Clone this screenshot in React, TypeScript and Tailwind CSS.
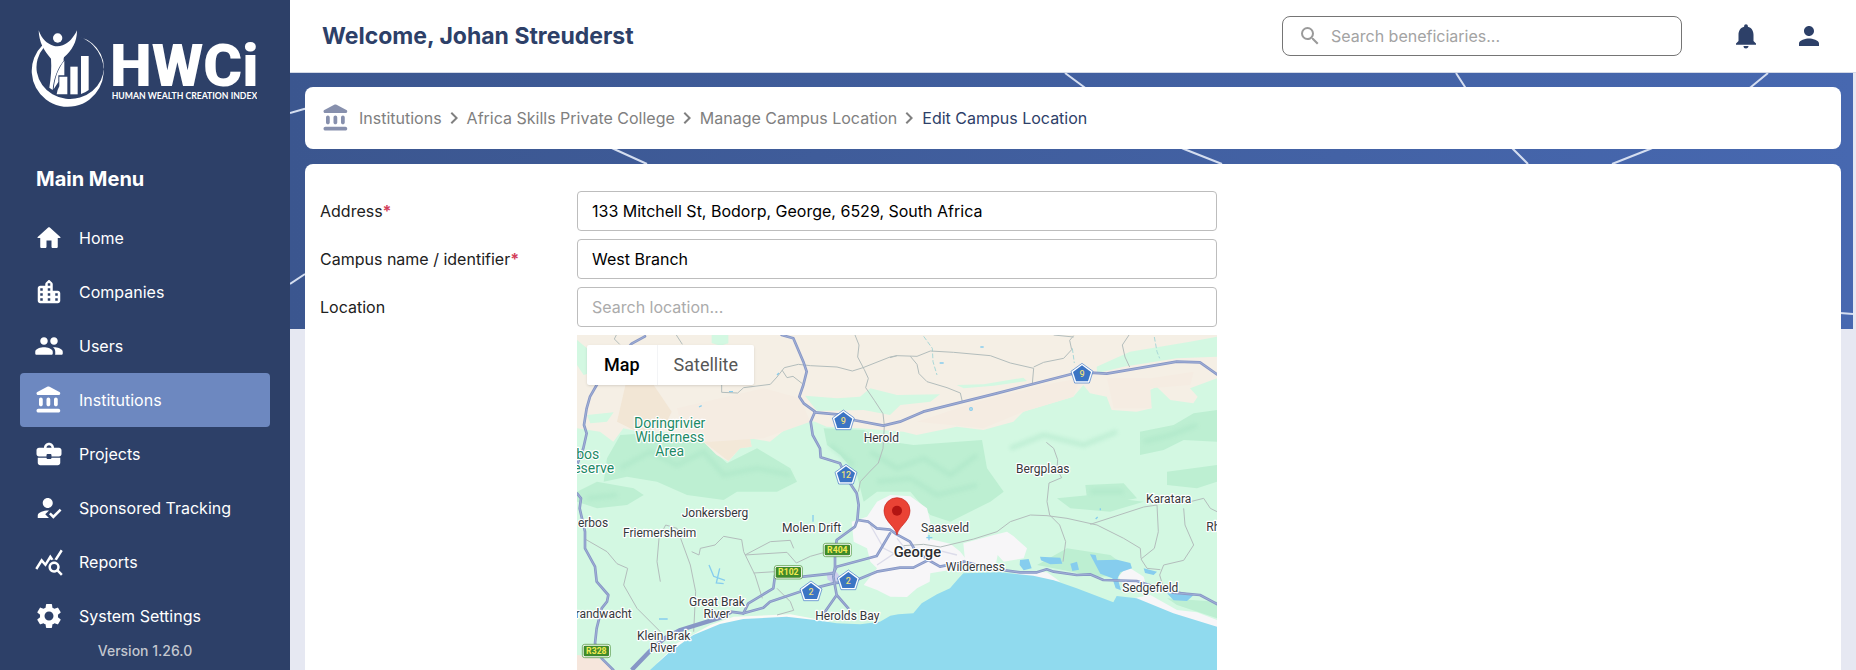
import {
  MdChevronRight,
  MdHowToReg,
  MdNotifications,
  MdPerson,
  MdQueryStats,
  MdSearch,
  MdSettings,
} from "react-icons/md";

const paths = {
  home: "M10 19v-5h4v5c0 .55.45 1 1 1h3c.55 0 1-.45 1-1v-7h1.7c.46 0 .68-.57.33-.87L12.67 3.6c-.38-.34-.96-.34-1.34 0l-8.36 7.53c-.34.3-.13.87.33.87H5v7c0 .55.45 1 1 1h3c.55 0 1-.45 1-1z",
  city: "M15 11V5.83c0-.53-.21-1.04-.59-1.41L12.7 2.71c-.39-.39-1.02-.39-1.41 0l-1.7 1.7C9.21 4.79 9 5.3 9 5.83V7H5c-1.1 0-2 .9-2 2v10c0 1.1.9 2 2 2h14c1.1 0 2-.9 2-2v-6c0-1.1-.9-2-2-2h-4zm-8 8H5v-2h2v2zm0-4H5v-2h2v2zm0-4H5V9h2v2zm6 8h-2v-2h2v2zm0-4h-2v-2h2v2zm0-4h-2V9h2v2zm0-4h-2V5h2v2zm6 12h-2v-2h2v2zm0-4h-2v-2h2v2z",
  people:
    "M16 11c1.66 0 2.99-1.34 2.99-3S17.66 5 16 5s-3 1.34-3 3 1.34 3 3 3zm-8 0c1.66 0 2.99-1.34 2.99-3S9.66 5 8 5 5 6.34 5 8s1.34 3 3 3zm0 2c-2.33 0-7 1.17-7 3.5V18c0 .55.45 1 1 1h12c.55 0 1-.45 1-1v-1.5c0-2.33-4.67-3.5-7-3.5zm8 0c-.29 0-.62.02-.97.05.02.01.03.03.04.04 1.14.83 1.93 1.94 1.93 3.41V18c0 .35-.07.69-.18 1H22c.55 0 1-.45 1-1v-1.5c0-2.33-4.67-3.5-7-3.5z",
  bank: "M4 11.5v4c0 .83.67 1.5 1.5 1.5S7 16.33 7 15.5v-4c0-.83-.67-1.5-1.5-1.5S4 10.67 4 11.5zm6 0v4c0 .83.67 1.5 1.5 1.5s1.5-.67 1.5-1.5v-4c0-.83-.67-1.5-1.5-1.5s-1.5.67-1.5 1.5zM3.5 22h16c.83 0 1.5-.67 1.5-1.5s-.67-1.5-1.5-1.5h-16c-.83 0-1.5.67-1.5 1.5S2.67 22 3.5 22zM16 11.5v4c0 .83.67 1.5 1.5 1.5s1.5-.67 1.5-1.5v-4c0-.83-.67-1.5-1.5-1.5s-1.5.67-1.5 1.5zM10.57 1.49l-7.9 4.16c-.41.21-.67.64-.67 1.1C2 7.44 2.56 8 3.25 8h16.51C20.44 8 21 7.44 21 6.75c0-.46-.26-.89-.67-1.1l-7.9-4.16c-.58-.31-1.28-.31-1.86 0z",
  briefcase:
    "M13 16h-2c-.55 0-1-.45-1-1H3.01v4c0 1.1.9 2 2 2H19c1.1 0 2-.9 2-2v-4h-7c0 .55-.45 1-1 1zm7-9h-4c0-2.21-1.79-4-4-4S8 4.79 8 7H4c-1.1 0-2 .9-2 2v3c0 1.11.89 2 2 2h6v-1c0-.55.45-1 1-1h2c.55 0 1 .45 1 1v1h6c1.1 0 2-.9 2-2V9c0-1.1-.9-2-2-2zM10 7c0-1.1.9-2 2-2s2 .9 2 2H9.99z",
};

function Icon({ name }: { name: keyof typeof paths }) {
  return (
    <svg viewBox="0 0 24 24" width="30" height="30" fill="currentColor" aria-hidden="true">
      <path d={paths[name]} />
    </svg>
  );
}

const menu = [
  { label: "Home", icon: <Icon name="home" /> },
  { label: "Companies", icon: <Icon name="city" /> },
  { label: "Users", icon: <Icon name="people" /> },
  { label: "Institutions", icon: <Icon name="bank" />, active: true },
  { label: "Projects", icon: <Icon name="briefcase" /> },
  { label: "Sponsored Tracking", icon: <MdHowToReg size={30} /> },
  { label: "Reports", icon: <MdQueryStats size={30} /> },
  { label: "System Settings", icon: <MdSettings size={30} /> },
];

const crumbs = ["Institutions", "Africa Skills Private College", "Manage Campus Location"];

function Logo() {
  return (
    <svg viewBox="93 84 678 240" className="h-20 w-[226px]" fill="#fff" role="img" aria-label="HWCi">
      <path d="M128 135 A108 108 0 1 0 240 111 A101 95 0 1 1 132 142 Z" />
      <circle cx="173" cy="114" r="14" />
      <path d="M116 91 C126 118 140 131 160 137 Q173 141 188 136 C206 129 221 113 231 91 C231 128 215 152 192 172 Q190 178 191 182 C175 202 161 232 158 270 L148 263 C153 232 155 204 153 176 C132 152 117 127 116 91 Z" />
      <path d="M193 182 V226 H175 V246 L161 268 C164 232 175 204 193 182 Z" />
      <path d="M178 230 h24 v53 h-32 q2 -14 8 -24 Z" />
      <rect x="211" y="200" width="22" height="83" />
      <path d="M243 168 h23 v102 q-10 8 -23 12 Z" />
      <text x="330" y="258" fontFamily="Roboto, sans-serif" fontSize="178" fontWeight="900">
        HWCi
      </text>
      <text x="335" y="296" fontFamily="Lato, sans-serif" fontSize="26" fontWeight="700">
        HUMAN WEALTH CREATION INDEX
      </text>
    </svg>
  );
}

function Sidebar() {
  return (
    <aside className="flex w-[290px] shrink-0 flex-col bg-[#2d4068] text-white">
      <div className="px-[31px] pt-7">
        <Logo />
      </div>
      <h2 className="mt-[57px] px-9 text-xl font-bold">Main Menu</h2>
      <nav className="mt-[18px] flex flex-col px-5">
        {menu.map((m) => (
          <a
            key={m.label}
            href="#"
            className={`flex h-[54px] items-center gap-[15px] rounded px-3.5 ${m.active ? "bg-[#6d88c0]" : ""}`}
          >
            {m.icon}
            {m.label}
          </a>
        ))}
      </nav>
      <p className="text-center text-sm leading-4 font-medium text-[#c3c7cf]">Version 1.26.0</p>
    </aside>
  );
}

function Header() {
  return (
    <header className="flex h-[73px] shrink-0 items-center justify-between border-b border-[#d3d9e6] bg-white px-8">
      <h1 className="text-[23px] font-bold text-[#2d4068]">Welcome, Johan Streuderst</h1>
      <div className="flex items-center">
        <label className="flex h-10 w-[400px] items-center gap-[9px] rounded-lg border border-[#757575] px-[15px]">
          <MdSearch size={24} className="shrink-0 text-[#9a9a9a]" />
          <input
            type="search"
            aria-label="Search beneficiaries"
            placeholder="Search beneficiaries..."
            className="min-w-0 flex-1 outline-none placeholder:text-[#a3a3a3]"
          />
        </label>
        <button type="button" aria-label="Notifications" className="ml-[49px] text-[#2d4068]">
          <MdNotifications size={30} />
        </button>
        <button type="button" aria-label="Profile" className="ml-[33px] text-[#2d4068]">
          <MdPerson size={30} />
        </button>
      </div>
    </header>
  );
}

function Breadcrumbs() {
  return (
    <nav aria-label="Breadcrumb" className="flex h-[62px] shrink-0 items-center rounded-lg bg-white px-4 text-[#808080]">
      <span className="mr-2 text-[#8790ad]">
        <Icon name="bank" />
      </span>
      {crumbs.map((c) => (
        <span key={c} className="mr-px flex items-center">
          <a href="#">{c}</a>
          <MdChevronRight size={24} />
        </span>
      ))}
      <span aria-current="page" className="text-[#2d4068]">
        Edit Campus Location
      </span>
    </nav>
  );
}

const minorRoads = [
  "M118 0 L112 12 L128 28",
  "M298 0 L316 28 M434 150 V172 L482 174 L500 158 L580 148 L600 126 L622 98 L664 88 L700 92 L780 96 L826 108 L858 98 L939 66 L960 62",
  "M615 105 L630 128 L648 124 L676 146",
  "M834 0 L846 30 L842 66 L862 104 L874 130 L866 158 L892 196 L918 236 L922 272 L918 340 L904 384 L880 408 L850 440 L844 470",
  "M939 68 L960 62 L1020 64 L1060 48 L1130 52 L1240 62 L1300 84 L1370 100 L1366 146",
  "M1370 96 L1400 82 L1460 70 L1484 44 L1478 16 L1490 2 M1430 0 L1490 6",
  "M1000 64 L1020 88 L1026 116 L1050 140 L1110 158 L1150 174 L1156 200",
  "M1656 0 L1636 30 L1644 66 L1658 96",
  "M1408 322 L1430 340 L1442 374 L1440 404 L1454 428 L1416 444 L1410 500 L1418 540 L1448 570 L1466 620 L1458 680",
  "M979 632 L1040 628 L1090 636 L1190 612 L1260 590 L1300 560 L1360 540 L1410 542 L1470 550 L1560 570 L1640 610 L1690 640 L1692 670",
  "M1540 568 L1620 542 L1700 516 L1740 510 L1744 590 L1732 640 L1692 672 L1710 700 L1750 704",
  "M1820 520 L1824 570 L1850 630 L1820 676 L1760 690 L1748 720 L1760 760 L1830 776",
  "M1840 500 L1880 490 L1900 520 L1920 530",
  "M24 612 L90 650 L120 686 L152 700 L140 750 L180 820 L250 890",
  "M246 610 L240 680 L250 740 M250 600 L266 570 L300 580 L340 690 L356 770 L350 890",
  "M344 650 L366 660 L370 640 L414 630 L440 604 L494 614 L500 650 L534 720 L556 790",
  "M504 660 L580 620 L640 616 L650 640 M504 660 L630 652 L658 684 L700 664 L750 650",
  "M530 714 L594 710 M600 760 L640 800 L650 826 L600 840",
];

const motorways = [
  "M204 4 L164 26 L59 150 L39 185 L29 220 L21 270 L29 295 L19 340 L0 390",
  "M0 475 L12 490 L8 520 L24 590 L24 640 L54 695 L59 740 L94 780 L90 800 L74 820 L59 880 L54 925 L74 970 L109 1005",
  "M614 0 L649 10 L679 80 L689 110 L679 150 L667 185 L680 205 L714 230 L701 260 L707 300 L729 340 L731 367 L789 385 L809 430 L839 475 L845 510 L841 555 L834 575 L779 615 L774 660 L774 695 L769 725 L779 780 L744 830 M779 780 L814 820",
  "M714 232 L780 238 L829 255 L919 272 L969 260 L1039 230 L1259 175 L1484 117 L1539 113 L1589 116 L1799 80 L1869 82 L1920 118",
  "M459 830 L499 835 L559 818 L579 800 L669 770 L769 745 L839 735 L899 710 L969 698 L1009 698 L1054 675 L1089 695 L1160 680 L1240 700 L1329 712 L1380 712 L1409 703 L1430 710 L1499 720 L1539 718 L1579 735 L1679 738 L1789 773 L1869 780 L1920 807",
  "M499 835 L514 805 L589 760 L594 722 L679 725 L769 715 L779 695 L899 663 L939 595",
  "M841 555 L874 560 L899 580 L939 584 L959 598 L999 620 L1014 645 L1054 675",
];

const places = [
  { name: "Herold", x: 913, y: 322 },
  { name: "Bergplaas", x: 1397, y: 415 },
  { name: "Karatara", x: 1775, y: 504 },
  { name: "Rh", x: 1909, y: 587 },
  { name: "Jonkersberg", x: 414, y: 547 },
  { name: "Friemersheim", x: 248, y: 606 },
  { name: "erbos", x: 48, y: 576 },
  { name: "Molen Drift", x: 704, y: 591 },
  { name: "Saasveld", x: 1104, y: 590 },
  { name: "Wilderness", x: 1195, y: 708 },
  { name: "Great Brak", x: 420, y: 813 },
  { name: "River", x: 419, y: 848 },
  { name: "Herolds Bay", x: 811, y: 855 },
  { name: "Klein Brak", x: 260, y: 915 },
  { name: "River", x: 259, y: 951 },
  { name: "Sedgefield", x: 1720, y: 771 },
  { name: "randwacht", x: 80, y: 850 },
];

const parks = [
  { name: "Doringrivier", x: 278, y: 278 },
  { name: "Wilderness", x: 278, y: 320 },
  { name: "Area", x: 278, y: 362 },
  { name: "bos", x: 32, y: 371 },
  { name: "eserve", x: 50, y: 413 },
];

const nationalRoads = [
  { ref: "9", x: 799, y: 257 },
  { ref: "12", x: 807, y: 420 },
  { ref: "9", x: 1515, y: 117 },
  { ref: "2", x: 702, y: 770 },
  { ref: "2", x: 814, y: 737 },
];

const regionalRoads = [
  { ref: "R404", x: 781, y: 645 },
  { ref: "R102", x: 634, y: 712 },
  { ref: "R328", x: 58, y: 948 },
];

function MapCanvas() {
  return (
    <svg
      viewBox="0 0 1920 1005"
      preserveAspectRatio="xMidYMin slice"
      className="absolute inset-0 size-full"
      fontFamily="Roboto, sans-serif"
      role="img"
      aria-label="Map of George"
    >
      <defs>
        <filter id="soft" x="-10%" y="-10%" width="120%" height="120%">
          <feGaussianBlur stdDeviation="7" />
        </filter>
      </defs>
      <rect width="1920" height="1100" fill="#d3f8e2" />

      {/* forest */}
      <g fill="#bdefd2">
        <path d="M90 370 L130 300 L210 295 L310 315 L380 320 L450 385 L540 340 L640 400 L660 440 L600 470 L480 470 L440 495 L330 480 L240 440 L150 425 L80 440 Z" />
        <path d="M0 470 L60 440 L170 460 L200 480 L150 510 L60 520 L0 500 Z" />
        <path d="M740 280 L860 285 L940 320 L1010 330 L1215 315 L1230 400 L1280 470 L1240 500 L1120 560 L1060 540 L1000 470 L900 470 L860 500 L840 420 L790 360 L750 330 Z" />
        <path d="M1689 290 L1790 270 L1850 235 L1920 225 L1920 320 L1820 315 L1760 345 L1689 360 Z" />
        <path d="M1525 450 L1640 445 L1680 490 L1620 500 L1530 490 Z M1770 410 L1920 390 L1920 440 L1860 460 L1770 450 Z" />
        <path d="M1440 490 L1540 480 L1700 500 L1600 530 L1480 520 Z" />
        <path d="M1380 690 L1470 640 L1600 660 L1680 720 L1560 725 Z M1770 790 L1920 800 L1920 850 L1800 810 Z" />
      </g>
      <g fill="none" stroke="#a5e2c3" strokeWidth="14" opacity="0.45" filter="url(#soft)">
        <path d="M130 400 L220 350 L300 390 L380 350 L440 420 L540 400 L640 420" />
        <path d="M880 350 L960 400 L1040 370 L1120 420 L1200 360 M900 440 L1000 430 L1080 480 L1200 450" />
        <path d="M1700 320 L1780 300 L1860 270 M1300 340 L1400 300 L1520 330 L1620 290" />
        <path d="M30 490 L120 480 M760 330 L830 390 M1540 470 L1640 470" />
      </g>

      {/* farmland */}
      <path
        fill="#f5efe5"
        d="M0 0 H1920 V130 L1839 160 L1862 185 L1849 205 L1780 195 L1739 155 L1709 170 L1724 220 L1679 230 L1604 225 L1589 185 L1539 175 L1519 150 L1489 185 L1339 230 L1309 260 L1219 285 L1139 275 L1019 300 L979 290 L849 280 L749 275 L714 260 L679 255 L629 280 L579 320 L519 310 L524 335 L489 340 L454 380 L419 360 L379 320 L309 315 L269 290 L209 295 L139 280 L109 320 L69 290 L0 280 Z"
      />
      <g fill="#f2e6d5">
        <path d="M150 130 L230 150 L284 230 L260 280 L180 290 L120 260 Z" />
        <path d="M380 320 L519 310 L524 335 L489 340 L454 378 Z" opacity="0.8" />
      </g>
      <path d="M560 160 L670 190 L700 260 L560 310 L400 320 L320 300 L300 220 Z M1020 260 L1200 200 L1400 150 L1510 130 L1489 185 L1339 230 L1219 280 Z M1590 130 L1720 130 L1850 110 L1840 150 L1720 160 L1724 220 L1610 220 Z" fill="#f5ece2" />
      <g fill="#d3f8e2">
        <path d="M404 0 H454 V25 L430 32 L404 24 Z M0 15 L30 40 L50 110 L20 120 L0 90 Z" />
        <path d="M684 182 L780 190 L849 185 L880 160 L960 180 L1089 178 L1060 200 L970 210 L939 240 L860 225 L720 228 Z" />
        <path d="M1559 95 L1659 50 L1839 20 L1920 5 V65 L1800 70 L1640 95 L1560 115 Z" />
        <path d="M1139 150 L1220 148 L1339 128 L1350 138 L1250 152 L1160 160 Z M30 240 L110 232 L90 260 L40 265 Z" />
      </g>

      {/* towns */}
      <g fill="#f7f6f8">
        <path d="M824 560 L870 545 L900 500 L940 480 L1000 484 L1050 520 L1060 560 L1050 610 L1120 626 L1150 650 L1165 670 L1150 700 L1060 715 L1058 740 L1020 760 L990 786 L940 785 L900 765 L860 750 L900 700 L880 680 L870 640 L830 620 Z" />
        <path d="M1159 625 L1250 600 L1290 590 L1310 604 L1350 640 L1340 670 L1280 680 L1262 660 L1256 690 L1165 686 Z" />
        <path d="M1624 725 L1640 706 L1660 700 L1700 725 L1710 760 L1640 750 Z" />
        <path d="M1670 790 L1720 780 L1800 825 L1860 832 L1920 855 V880 L1780 840 Z M1300 708 L1410 712 L1450 740 L1340 726 Z" />
      </g>
      <path d="M0 960 L60 965 L110 1005 H0 Z" fill="#f6e6dc" />
      <path d="M240 985 L300 925 L400 870 L470 845 L640 838 L760 860 L640 870 L400 900 Z" fill="#fbfaf6" />

      {/* sea and lakes */}
      <path
        fill="#90daee"
        d="M219 1005 L279 950 L349 900 L429 867 L499 852 L629 845 L714 855 L779 865 L850 868 L909 860 L940 842 L964 838 L1009 835 L1034 805 L1080 778 L1119 760 L1145 730 L1159 715 L1269 712 L1369 722 L1430 736 L1499 760 L1609 802 L1619 783 L1679 790 L1789 835 L1920 875 V1100 H200 Z"
      />
      <g fill="#86cdee">
        <path d="M1329 675 L1355 672 L1364 700 L1340 706 L1328 690 Z M1389 665 L1450 668 L1456 686 L1420 688 L1392 676 Z" />
        <path d="M1480 686 L1500 680 L1506 704 L1486 708 Z" />
        <path d="M1539 658 L1556 660 L1560 676 L1620 674 L1660 684 L1665 700 L1630 712 L1622 730 L1632 766 L1616 760 L1606 730 L1570 716 L1556 690 Z" />
        <path d="M1700 700 L1740 710 L1730 720 L1704 714 Z M1770 775 L1850 780 L1830 798 L1790 796 Z" />
      </g>
      <g fill="none" stroke="#86cdee" strokeWidth="4">
        <path d="M396 690 L410 724 L444 736 M428 700 L418 744 L440 746 M708 540 V560 M1056 600 V616 M1048 608 H1066 M246 852 H272" />
        <path d="M456 170 H468 M366 216 L374 212 M600 120 L606 114 M1210 36 H1220 M1088 84 H1100 M1570 526 V520 M1556 552 L1562 546" />
        <circle cx="1182" cy="222" r="4" />
      </g>
      <path d="M1040 4 L1066 40 L1068 80 L1080 120 M1732 6 L1740 50 L1748 70 M1486 40 L1492 84" fill="none" stroke="#a9d8d8" strokeWidth="3" strokeDasharray="14 6" />

      {/* roads */}
      <g fill="none" stroke="#b3bdbc" strokeWidth="3" strokeLinejoin="round">
        {minorRoads.map((d) => (
          <path key={d} d={d} />
        ))}
      </g>
      <g fill="none" stroke="#dcdcea" strokeWidth="4">
        <path d="M880 570 L920 640 L960 660 M960 610 L1000 660 L1060 640 M900 690 L960 650 M1060 640 L1140 660" />
      </g>
      <path d="M748 715 L774 705 L790 725 L774 748 L752 734 Z" fill="#cfd0ee" />
      <g fill="none" stroke="#8797c6" strokeWidth="8" strokeLinejoin="round" strokeLinecap="round">
        {motorways.map((d) => (
          <path key={d} d={d} />
        ))}
      </g>
      <g fill="none" stroke="#a0afd6" strokeWidth="3" strokeLinejoin="round">
        {motorways.map((d) => (
          <path key={d} d={d} />
        ))}
      </g>
      <path d="M164 1005 L219 948 L262 910 L310 885 L430 848 L462 830" fill="none" stroke="#8797c6" strokeWidth="13" strokeLinejoin="round" />

      {/* road numbers */}
      {nationalRoads.map((r) => (
        <g key={`${r.x}-${r.ref}`} transform={`translate(${r.x} ${r.y})`}>
          <path d="M0 -32 L33 -8 L22 27 H-22 L-33 -8 Z" fill="#fff" stroke="#3b74c4" strokeWidth="2" strokeLinejoin="round" />
          <path d="M0 -26 L27 -6 L18 22 H-18 L-27 -6 Z" fill="#3b74c4" />
          <text y="10" textAnchor="middle" fontSize="27" fontWeight="500" fill="#eadf7c">
            {r.ref}
          </text>
        </g>
      ))}
      {regionalRoads.map((r) => (
        <g key={r.ref} transform={`translate(${r.x} ${r.y})`}>
          <rect x="-42" y="-20" width="84" height="40" rx="7" fill="#fff" stroke="#3f8a2b" strokeWidth="2" />
          <rect x="-38" y="-16" width="76" height="32" rx="4" fill="#3f8a2b" />
          <text y="9" textAnchor="middle" fontSize="26" fontWeight="700" fill="#f2ea52">
            {r.ref}
          </text>
        </g>
      ))}

      {/* place names */}
      <g textAnchor="middle" stroke="#fff" strokeWidth="7" strokeLinejoin="round" paintOrder="stroke">
        <g fontSize="42" fill="#1d8a66">
          {parks.map((p) => (
            <text key={p.name} x={p.x} y={p.y}>
              {p.name}
            </text>
          ))}
        </g>
        <g fontSize="36" fill="#35383c">
          {places.map((p) => (
            <text key={`${p.name}-${p.x}`} x={p.x} y={p.y}>
              {p.name}
            </text>
          ))}
        </g>
        <text x="1021" y="665" fontSize="44" fontWeight="500" fill="#2b2d30">
          George
        </text>
      </g>

      {/* marker */}
      <path d="M960 600 C956 574 921 560 921 527 A39 39 0 0 1 999 527 C999 560 964 574 960 600 Z" fill="#ea4335" stroke="#c5221f" strokeWidth="2" />
      <circle cx="960" cy="527" r="15" fill="#b31412" />
    </svg>
  );
}

const inputClass =
  "h-10 w-full rounded border border-[#bdbdbd] bg-white px-3.5 text-black outline-none placeholder:text-[#ababab]";

function Field({
  id,
  label,
  required,
  children,
}: {
  id: string;
  label: string;
  required?: boolean;
  children: React.ReactNode;
}) {
  return (
    <div className="flex shrink-0 items-center">
      <label htmlFor={id} className="w-[257px] shrink-0 text-[#212121]">
        {label}
        {required && <span className="font-bold text-[#d3405a]">*</span>}
      </label>
      <div className="w-full max-w-[640px]">{children}</div>
    </div>
  );
}

function LocationForm() {
  return (
    <form className="flex min-h-0 flex-1 flex-col gap-2 rounded-t-lg bg-white px-[15px] pt-[27px]">
      <Field id="address" label="Address" required>
        <input id="address" defaultValue="133 Mitchell St, Bodorp, George, 6529, South Africa" className={inputClass} />
      </Field>
      <Field id="campus" label="Campus name / identifier" required>
        <input id="campus" defaultValue="West Branch" className={inputClass} />
      </Field>
      <Field id="location" label="Location">
        <input id="location" placeholder="Search location..." className={inputClass} />
      </Field>
      <div className="relative ml-[257px] min-h-0 max-w-[640px] flex-1 overflow-hidden">
        <MapCanvas />
        <div className="absolute top-2.5 left-2.5 flex h-10 rounded-xs bg-white font-[Roboto,sans-serif] text-lg shadow">
          <button type="button" className="px-[17px] font-medium text-black">
            Map
          </button>
          <button type="button" className="border-l border-gray-100 px-4 text-[#565656]">
            Satellite
          </button>
        </div>
      </div>
    </form>
  );
}

function Backdrop() {
  return (
    <div className="absolute top-0 right-[3px] left-0 h-64 bg-linear-to-r from-[#3b568f] to-[#4768b0]">
      <svg viewBox="0 0 1563 256" preserveAspectRatio="none" className="size-full" fill="none" stroke="#d5def0" strokeWidth="2">
        <path d="M0 40 L14 36 Q170 0 324 76 L357 91" />
        <path d="M0 211 L15 201" />
        <path d="M775 0 L794 14 Q850 58 894 76 L932 91" />
        <path d="M1166 0 L1175 14 Q1198 50 1223 76 L1238 91" />
        <path d="M1478 0 L1461 14 Q1410 54 1360 76 L1322 91" />
        <path d="M1550 240 L1563 241" />
      </svg>
    </div>
  );
}

export default function App() {
  return (
    <div className="flex h-screen overflow-hidden bg-[#e6e8f2] font-[Inter,sans-serif]">
      <Sidebar />
      <div className="flex min-w-0 flex-1 flex-col">
        <Header />
        <main className="relative flex min-h-0 flex-1 flex-col">
          <Backdrop />
          <div className="relative flex min-h-0 flex-1 flex-col gap-[15px] px-[15px] pt-3.5">
            <Breadcrumbs />
            <LocationForm />
          </div>
        </main>
      </div>
    </div>
  );
}
